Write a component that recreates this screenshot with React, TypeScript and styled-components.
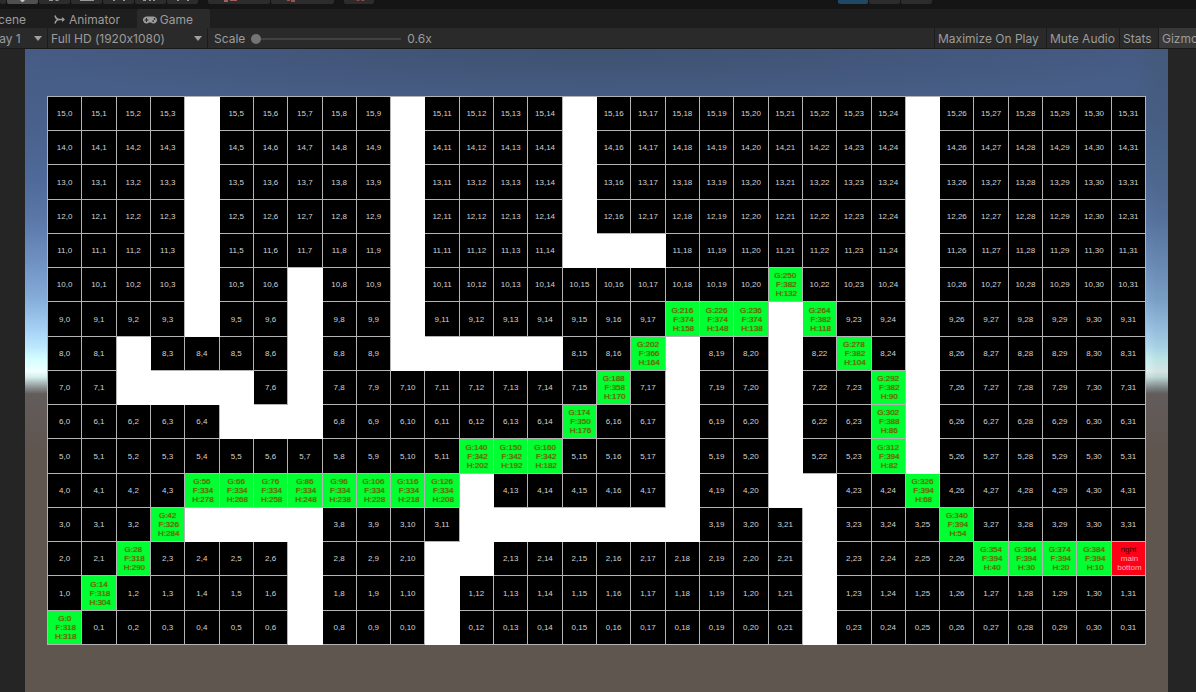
import React from 'react';
import styled, { createGlobalStyle } from 'styled-components';
import { FaGamepad } from 'react-icons/fa';

const GlobalStyle = createGlobalStyle`
  *, *::before, *::after { box-sizing: border-box; }
  body {
    margin: 0;
    background: #252525;
    color: #9c9c9c;
    font: 12px/18px Inter, "Liberation Sans", sans-serif;
    font-variant-ligatures: no-contextual;
  }
`;

const Editor = styled.div`
  display: flex;
  flex-direction: column;
  min-height: 100vh;
  overflow: hidden;
`;

/* Main toolbar: only the lower edge of its buttons is in view */
const MainBar = styled.header`
  display: flex;
  justify-content: space-between;
  height: 9px;
  padding-right: 264px;
  background: #151515;
`;

const ToolGroups = styled.div`
  display: flex;
  gap: 10px;
`;

const ToolGroup = styled.div`
  display: flex;
  gap: 1px;
`;

const ToolButton = styled.button<{ $width: number; $color?: string }>`
  display: flex;
  justify-content: center;
  width: ${(p) => p.$width}px;
  height: 4px;
  padding: 0;
  border: 0;
  border-radius: 0 0 2px 2px;
  background: ${(p) => p.$color ?? '#2c2c2c'};
`;

const TabBar = styled.nav`
  display: flex;
  height: 19px;
  background: #1e1e1e;
`;

const Tab = styled.button<{ $active?: boolean; $width: number }>`
  display: flex;
  align-items: center;
  justify-content: flex-end;
  gap: 3px;
  width: ${(p) => p.$width}px;
  padding: 2px 17px 0 0;
  overflow: hidden;
  border: 0;
  border-radius: 2px 2px 0 0;
  background: ${(p) => (p.$active ? '#2a2a2a' : 'transparent')};
  color: inherit;
  font: inherit;
  white-space: nowrap;

  svg { flex: none; }
`;

const ViewBar = styled.div`
  display: flex;
  height: 21px;
  background: #2a2a2a;
  border-bottom: 1px solid #191919;
  overflow: hidden;
`;

const DropdownBox = styled.label<{ $width: number }>`
  display: grid;
  grid-template-columns: minmax(0, 1fr) 8px;
  align-items: center;
  justify-items: end;
  flex: none;
  width: ${(p) => p.$width}px;
  padding-right: 5px;
  overflow: hidden;
  border-right: 1px solid #1c1c1c;

  svg { grid-area: 1 / 2; pointer-events: none; }
`;

const Select = styled.select<{ $width: number }>`
  grid-area: 1 / 1 / 2 / 3;
  appearance: none;
  width: ${(p) => p.$width}px;
  height: 20px;
  padding: 2px 0 0;
  border: 0;
  background: transparent;
  color: inherit;
  font: inherit;
  font-variant-ligatures: inherit;
`;

const ScaleLabel = styled.label`
  display: flex;
  align-items: center;
  gap: 6px;
  padding: 2px 0 0 6px;
`;

const ScaleSlider = styled.input`
  appearance: none;
  width: 150px;
  height: 10px;
  margin: 0;
  background: transparent;

  &::-webkit-slider-runnable-track {
    height: 2px;
    background: #414141;
  }
  &::-webkit-slider-thumb {
    appearance: none;
    width: 10px;
    height: 10px;
    margin-top: -4px;
    border-radius: 50%;
    background: #747474;
  }
`;

const ViewOptions = styled.div`
  display: flex;
  margin-left: auto;
`;

const OptionButton = styled.button<{ $width: number; $on?: boolean }>`
  flex: none;
  width: ${(p) => p.$width}px;
  padding: 2px 0 0 3px;
  overflow: hidden;
  border: 0;
  border-left: 1px solid #1c1c1c;
  background: ${(p) => (p.$on ? '#393939' : 'transparent')};
  color: inherit;
  font: inherit;
  text-align: left;
  white-space: nowrap;
`;

const Scene = styled.main`
  flex: 1;
  margin: 0 28px 0 25px;
  padding: 47px 22px;
  background:
    linear-gradient(90deg, transparent 0, transparent 97%, rgba(60, 80, 80, 0.16) 99%) 0 0 / 100% 344px no-repeat,
    radial-gradient(ellipse 600px 60px at 50% 0, rgba(50, 65, 80, 0.4), transparent) 0 0 / 100% 60px no-repeat,
    linear-gradient(
      180deg,
      #465c85 0,
      #48608a 70px,
      #4f6a99 130px,
      #5a77a8 170px,
      #7093c4 215px,
      #85add9 250px,
      #a5d0f5 280px,
      #bce8ff 298px,
      #d4ffff 310px,
      #f2ffff 322px,
      #d5efee 328px,
      #8d9594 338px,
      #625c5b 345px,
      #5f5650 400px
    );
`;

const Board = styled.div`
  display: grid;
  grid-template-columns: repeat(32, minmax(0, 1fr));
  grid-template-rows: repeat(16, minmax(0, 1fr));
  aspect-ratio: 2.002;
  border: solid #b4b4b4;
  border-width: 1px 0 0 1px;
  font: 8px/9px "Liberation Sans", Arial, sans-serif;
`;

type Kind = 'open' | 'wall' | 'path' | 'goal';

const fills: Record<Kind, string> = {
  open: '#000',
  wall: '#fff',
  path: '#00ff33',
  goal: '#ff0018',
};
const inks: Record<Kind, string> = {
  open: '#d2d2d2',
  wall: '#fff',
  path: '#6b6400',
  goal: '#ffb4b4',
};

const Cell = styled.div<{ $kind: Kind }>`
  display: flex;
  align-items: center;
  justify-content: center;
  border: solid ${(p) => (p.$kind === 'wall' ? '#fff' : '#b4b4b4')};
  border-width: 0 1px 1px 0;
  background: ${(p) => fills[p.$kind]};
  color: ${(p) => inks[p.$kind]};
  text-align: center;
  white-space: pre;
`;

const CellText = styled.span<{ $kind: Kind }>`
  display: block;
  text-shadow: ${(p) => (p.$kind === 'path' ? `0 0 1px ${inks.path}` : 'none')};

  &::first-line { color: ${(p) => (p.$kind === 'goal' ? '#300000' : inks[p.$kind])}; }
`;

const walls: Record<number, number[]> = {
  15: [4, 10, 15, 25],
  14: [4, 10, 15, 25],
  13: [4, 10, 15, 25],
  12: [4, 10, 15, 25],
  11: [4, 10, 15, 16, 17, 25],
  10: [4, 7, 10, 25],
  9: [4, 7, 10, 21, 25],
  8: [2, 7, 10, 11, 12, 13, 14, 18, 21, 25],
  7: [2, 3, 4, 5, 7, 18, 21, 25],
  6: [5, 6, 7, 18, 21, 25],
  5: [18, 21, 25],
  4: [12, 18, 21, 22],
  3: [4, 5, 6, 7, 12, 13, 14, 15, 16, 17, 18, 22],
  2: [7, 11, 12, 22],
  1: [7, 11, 22],
  0: [7, 11, 22],
};

/* row, column, G, F, H */
const path: number[][] = [
  [0, 0, 0, 318, 318],
  [1, 1, 14, 318, 304],
  [2, 2, 28, 318, 290],
  [3, 3, 42, 326, 284],
  [4, 4, 56, 334, 278],
  [4, 5, 66, 334, 268],
  [4, 6, 76, 334, 258],
  [4, 7, 86, 334, 248],
  [4, 8, 96, 334, 238],
  [4, 9, 106, 334, 228],
  [4, 10, 116, 334, 218],
  [4, 11, 126, 334, 208],
  [5, 12, 140, 342, 202],
  [5, 13, 150, 342, 192],
  [5, 14, 160, 342, 182],
  [6, 15, 174, 350, 176],
  [7, 16, 188, 358, 170],
  [8, 17, 202, 366, 164],
  [9, 18, 216, 374, 158],
  [9, 19, 226, 374, 148],
  [9, 20, 236, 374, 138],
  [10, 21, 250, 382, 132],
  [9, 22, 264, 382, 118],
  [8, 23, 278, 382, 104],
  [7, 24, 292, 382, 90],
  [6, 24, 302, 388, 86],
  [5, 24, 312, 394, 82],
  [4, 25, 326, 394, 68],
  [3, 26, 340, 394, 54],
  [2, 27, 354, 394, 40],
  [2, 28, 364, 394, 30],
  [2, 29, 374, 394, 20],
  [2, 30, 384, 394, 10],
];

const pathText = new Map(
  path.map(([r, c, g, f, h]) => [`${r},${c}`, `G:${g}\n F:${f}\n H:${h}`]),
);

function nodeAt(row: number, col: number): { kind: Kind; text: string } {
  const key = `${row},${col}`;
  if (walls[row].includes(col)) return { kind: 'wall', text: '' };
  if (key === '2,31') return { kind: 'goal', text: 'right\n main\n bottom' };
  const costs = pathText.get(key);
  return costs ? { kind: 'path', text: costs } : { kind: 'open', text: key };
}

const nodes = Array.from({ length: 16 * 32 }, (_, i) => {
  const row = 15 - Math.floor(i / 32);
  const col = i % 32;
  return { key: `${row},${col}`, ...nodeAt(row, col) };
});

type Tool = { name: string; width: number; color?: string; mark?: string; ink?: string };

const toolGroups: Tool[][] = [
  [
    { name: 'Hand', width: 6 },
    { name: 'Move', width: 31, color: '#505050', mark: 'M13 0h5l-2 2h-1z', ink: '#c8c8c8' },
    { name: 'Rotate', width: 31, mark: 'M10 0h4v1h-4zM16 0h3l1 1h-3z' },
    { name: 'Scale', width: 31, mark: 'M9 0h14v1H9z' },
    { name: 'Rect', width: 31, mark: 'M10 0h2v1h-2zM20 0h2v1h-2z' },
    { name: 'Transform', width: 31, mark: 'M8 0h3v1H8zM14 0h2v1h-2zM18 0h2v1h-2z' },
    { name: 'Custom tool', width: 31, mark: 'M10 0h2v1h-2zM20 0h2v1h-2z' },
  ],
  [
    { name: 'Pivot', width: 62, mark: 'M0 0h4v2H0z M6 0h7v1H6z', ink: '#a06060' },
    { name: 'Local', width: 63, mark: 'M0 0h3v1H0zM4 0h4v2H4z', ink: '#a05050' },
  ],
  [{ name: 'Snap', width: 30, mark: 'M13 0h3v1h-3zM18 0h3v1h-3z', ink: '#8a4a4a' }],
];

const playTools: Tool[] = [
  { name: 'Play', width: 30, color: '#1f4866' },
  { name: 'Pause', width: 31 },
  { name: 'Step', width: 31 },
];

function Tools({ tools }: { tools: Tool[] }) {
  return (
    <ToolGroup>
      {tools.map((t) => (
        <ToolButton key={t.name} aria-label={t.name} $width={t.width} $color={t.color}>
          {t.mark && (
            <svg width="31" height="4" viewBox="0 0 31 4" aria-hidden="true">
              <path d={t.mark} fill={t.ink ?? '#999'} />
            </svg>
          )}
        </ToolButton>
      ))}
    </ToolGroup>
  );
}

function Dropdown({ name, value, width, textWidth }: { name: string; value: string; width: number; textWidth: number }) {
  return (
    <DropdownBox $width={width}>
      <Select aria-label={name} $width={textWidth}>
        <option>{value}</option>
      </Select>
      <svg width="8" height="5" viewBox="0 0 8 5" aria-hidden="true">
        <path d="M0 0h8L4 5z" fill="#a0a0a0" />
      </svg>
    </DropdownBox>
  );
}

export default function App() {
  return (
    <Editor>
      <GlobalStyle />
      <MainBar>
        <ToolGroups>
          {toolGroups.map((tools) => (
            <Tools key={tools[0].name} tools={tools} />
          ))}
        </ToolGroups>
        <Tools tools={playTools} />
      </MainBar>
      <TabBar>
        <Tab $width={43}>Scene</Tab>
        <Tab $width={94}>
          <svg width="12" height="11" viewBox="0 0 12 11" fill="none" stroke="#9c9c9c" aria-hidden="true">
            <path d="M1 1.5c.6 2.5 2 4 4.500 4M1 9.500c.6-2.500 2-4 4.500-4H10" strokeWidth="1.500" />
            <path d="M8 3l3 2.500L8 8z" fill="#9c9c9c" stroke="none" />
          </svg>
          Animator
        </Tab>
        <Tab $width={73} $active>
          <FaGamepad size={14} aria-hidden="true" />
          Game
        </Tab>
      </TabBar>
      <ViewBar>
        <Dropdown name="Display" value="Display 1" width={48} textWidth={71} />
        <Dropdown name="Aspect" value="Full HD (1920x1080)" width={160} textWidth={151} />
        <ScaleLabel>
          Scale
          <ScaleSlider type="range" min={0.6} max={5} step={0.1} defaultValue={0.6} />
          0.6x
        </ScaleLabel>
        <ViewOptions>
          <OptionButton $width={112}>Maximize On Play</OptionButton>
          <OptionButton $width={73}>Mute Audio</OptionButton>
          <OptionButton $width={39}>Stats</OptionButton>
          <OptionButton $width={38} $on>Gizmos</OptionButton>
        </ViewOptions>
      </ViewBar>
      <Scene>
        <Board>
          {nodes.map((n) => (
            <Cell key={n.key} $kind={n.kind}>
              {n.text && <CellText $kind={n.kind}>{n.text}</CellText>}
            </Cell>
          ))}
        </Board>
      </Scene>
    </Editor>
  );
}
